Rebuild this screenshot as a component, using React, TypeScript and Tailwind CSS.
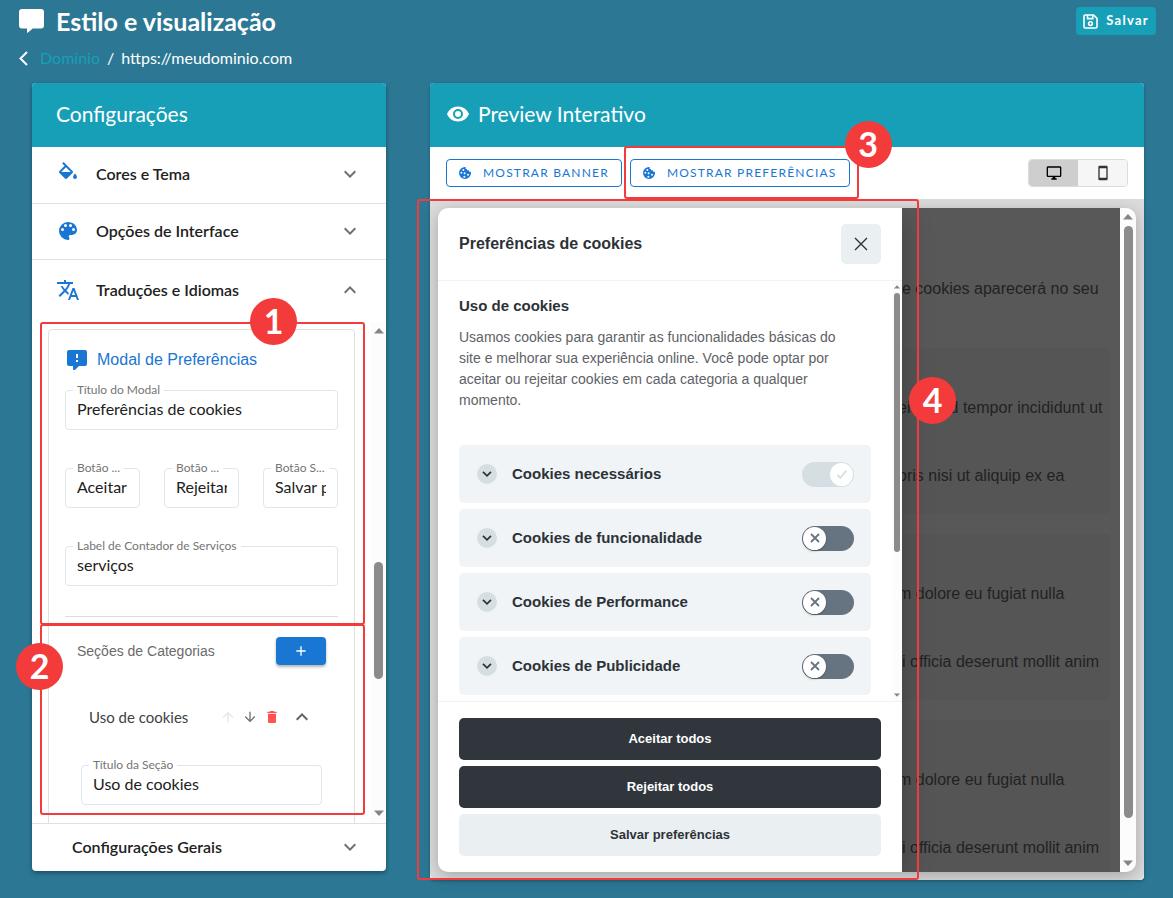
import React from "react";

const PATHS = {
  chevronDown: "M7.41,8.58L12,13.17L16.59,8.58L18,10L12,16L6,10L7.41,8.58Z",
  chevronUp: "M7.41,15.41L12,10.83L16.59,15.41L18,14L12,8L6,14L7.41,15.41Z",
  palette:
    "M17.5,12A1.5,1.5 0 0,1 16,10.5A1.5,1.5 0 0,1 17.5,9A1.5,1.5 0 0,1 19,10.5A1.5,1.5 0 0,1 17.5,12M14.5,8A1.5,1.5 0 0,1 13,6.5A1.5,1.5 0 0,1 14.5,5A1.5,1.5 0 0,1 16,6.5A1.5,1.5 0 0,1 14.5,8M9.5,8A1.5,1.5 0 0,1 8,6.5A1.5,1.5 0 0,1 9.5,5A1.5,1.5 0 0,1 11,6.5A1.5,1.5 0 0,1 9.5,8M6.5,12A1.5,1.5 0 0,1 5,10.5A1.5,1.5 0 0,1 6.5,9A1.5,1.5 0 0,1 8,10.5A1.5,1.5 0 0,1 6.5,12M12,3A9,9 0 0,0 3,12A9,9 0 0,0 12,21A1.5,1.5 0 0,0 13.5,19.5C13.5,19.11 13.35,18.76 13.11,18.5C12.88,18.23 12.73,17.88 12.73,17.5A1.5,1.5 0 0,1 14.23,16H16A5,5 0 0,0 21,11C21,6.58 16.97,3 12,3Z",
  fill: "M19,11.5C19,11.5 17,13.67 17,15A2,2 0 0,0 19,17A2,2 0 0,0 21,15C21,13.67 19,11.5 19,11.5M5.21,10L10,5.21L14.79,10M16.56,8.94L7.62,0L6.21,1.41L8.59,3.79L3.44,8.94C2.85,9.5 2.85,10.47 3.44,11.06L8.94,16.56C9.23,16.85 9.62,17 10,17C10.38,17 10.77,16.85 11.06,16.56L16.56,11.06C17.15,10.47 17.15,9.5 16.56,8.94Z",
  translate:
    "M12.87,15.07L10.33,12.56L10.36,12.53C12.1,10.59 13.34,8.36 14.07,6H17V4H10V2H8V4H1V6H12.17C11.5,7.92 10.44,9.75 9,11.35C8.07,10.32 7.3,9.19 6.69,8H4.69C5.42,9.63 6.42,11.17 7.67,12.56L2.58,17.58L4,19L9,14L12.11,17.11L12.87,15.07M18.5,10H16.5L12,22H14L15.12,19H19.87L21,22H23L18.5,10M15.88,17L17.5,12.67L19.12,17H15.88Z",
  eye: "M12,9A3,3 0 0,0 9,12A3,3 0 0,0 12,15A3,3 0 0,0 15,12A3,3 0 0,0 12,9M12,17A5,5 0 0,1 7,12A5,5 0 0,1 12,7A5,5 0 0,1 17,12A5,5 0 0,1 12,17M12,4.5C7,4.5 2.73,7.61 1,12C2.73,16.39 7,19.5 12,19.5C17,19.5 21.27,16.39 23,12C21.27,7.61 17,4.5 12,4.5Z",
  cookie:
    "M12,3A9,9 0 0,0 3,12A9,9 0 0,0 12,21A9,9 0 0,0 21,12C21,11.5 20.96,11 20.87,10.5C20.6,10 20,10 20,10H18V9C18,8 17,8 17,8H15V7C15,6 14,6 14,6H13V4C13,3 12,3 12,3M9.5,6A1.5,1.5 0 0,1 11,7.5A1.5,1.5 0 0,1 9.5,9A1.5,1.5 0 0,1 8,7.5A1.5,1.5 0 0,1 9.5,6M6.5,10A1.5,1.5 0 0,1 8,11.5A1.5,1.5 0 0,1 6.5,13A1.5,1.5 0 0,1 5,11.5A1.5,1.5 0 0,1 6.5,10M11.5,11A1.5,1.5 0 0,1 13,12.5A1.5,1.5 0 0,1 11.5,14A1.5,1.5 0 0,1 10,12.5A1.5,1.5 0 0,1 11.5,11M16.5,13A1.5,1.5 0 0,1 18,14.5A1.5,1.5 0 0,1 16.5,16H16.5A1.5,1.5 0 0,1 15,14.5H15A1.5,1.5 0 0,1 16.5,13M11,16A1.5,1.5 0 0,1 12.5,17.5A1.5,1.5 0 0,1 11,19A1.5,1.5 0 0,1 9.5,17.5A1.5,1.5 0 0,1 11,16Z",
  monitor:
    "M21,16H3V4H21M21,2H3C1.89,2 1,2.89 1,4V16A2,2 0 0,0 3,18H10V20H8V22H16V20H14V18H21A2,2 0 0,0 23,16V4C23,2.89 22.1,2 21,2Z",
  phone:
    "M17,19H7V5H17M17,1H7C5.89,1 5,1.89 5,3V21A2,2 0 0,0 7,23H17A2,2 0 0,0 19,21V3C19,1.89 18.1,1 17,1Z",
  commentAlert:
    "M9,22A1,1 0 0,1 8,21V18H4A2,2 0 0,1 2,16V4C2,2.89 2.9,2 4,2H20A2,2 0 0,1 22,4V16A2,2 0 0,1 20,18H13.9L10.2,21.71C10,21.9 9.75,22 9.5,22V22H9M13,10V6H11V10H13M13,14V12H11V14H13Z",
  arrowUp:
    "M13,20H11V8L5.5,13.5L4.08,12.08L12,4.16L19.92,12.08L18.5,13.5L13,8V20Z",
  arrowDown:
    "M11,4H13V16L18.5,10.5L19.92,11.92L12,19.84L4.08,11.92L5.5,10.5L11,16V4Z",
  trash:
    "M19,4H15.5L14.5,3H9.5L8.5,4H5V6H19M6,19A2,2 0 0,0 8,21H16A2,2 0 0,0 18,19V7H6V19Z",
  plus: "M19,13H13V19H11V13H5V11H11V5H13V11H19V13Z",
};

function Icon({ name, className = "size-6" }: { name: keyof typeof PATHS; className?: string }) {
  return (
    <svg viewBox="0 0 24 24" fill="currentColor" aria-hidden="true" className={`shrink-0 ${className}`}>
      <path d={PATHS[name]} />
    </svg>
  );
}

function Marker({ n, className }: { n: number; className: string }) {
  return (
    <span
      className={`absolute z-30 flex size-[47px] items-center justify-center rounded-full bg-[#f33b3b] pb-0.5 text-[34px] leading-none font-bold text-white ${className}`}
    >
      {n}
    </span>
  );
}

function Frame({ className }: { className: string }) {
  return <span className={`pointer-events-none absolute z-20 rounded-[3px] border-2 border-[#f33b3b] ${className}`} />;
}

function Triangle({ up = false, className }: { up?: boolean; className: string }) {
  return (
    <svg viewBox="0 0 10 6" fill="#858585" aria-hidden="true" className={className}>
      <path d={up ? "M5 0L10 5.5H0Z" : "M5 6L10 .5H0Z"} />
    </svg>
  );
}

function AccordionRow({
  icon,
  label,
  open = false,
  className,
}: {
  icon?: keyof typeof PATHS;
  label: string;
  open?: boolean;
  className: string;
}) {
  return (
    <button
      type="button"
      aria-expanded={open}
      className={`flex w-full items-center gap-4 px-6 pb-0.5 text-left text-base leading-6 font-semibold text-[#212121] ${className}`}
    >
      {icon ? <Icon name={icon} className="size-6 text-[#1976d2]" /> : <span />}
      <span className="flex-1">{label}</span>
      <Icon name={open ? "chevronUp" : "chevronDown"} className="size-6 text-[#707070]" />
    </button>
  );
}

function Field({ id, label, value }: { id: string; label: string; value: string }) {
  return (
    <div className="relative min-w-0 flex-1">
      <label
        htmlFor={id}
        className="absolute -top-2 left-2 bg-white px-1 text-xs leading-4 whitespace-nowrap text-[#757575]"
      >
        {label}
      </label>
      <input
        id={id}
        defaultValue={value}
        className="block h-10 w-full rounded-[4px] border border-[#e0e5e9] bg-transparent px-[11px] pb-[3px] text-base text-[#212121] outline-none"
      />
    </div>
  );
}

function Toggle({ label, locked = false }: { label: string; locked?: boolean }) {
  return (
    <label className="flex cursor-pointer">
      <input type="checkbox" className="peer sr-only" defaultChecked={locked} disabled={locked} aria-label={label} />
      <span
        className={`flex h-[25px] w-[52px] items-center rounded-full p-px ${
          locked ? "justify-end bg-[#d5dee2]" : "justify-start bg-[#667481]"
        }`}
      >
        <span
          className={`flex size-[23px] items-center justify-center rounded-full bg-white ${
            locked ? "" : "shadow-[0_1px_2px_rgba(24,32,3,0.36)]"
          }`}
        >
          <svg
            viewBox="0 0 12 12"
            fill="none"
            strokeWidth="1.8"
            className={`size-3 ${locked ? "stroke-[#d5dee2]" : "stroke-[#667481]"}`}
            aria-hidden="true"
          >
            <path d={locked ? "M1.5 7L4.3 9.8L10.5 2.5" : "M2 2L10 10M10 2L2 10"} />
          </svg>
        </span>
      </span>
    </label>
  );
}

function Category({ label, locked }: { label: string; locked?: boolean }) {
  return (
    <div className="flex h-[58px] items-center rounded-[5px] bg-[#f0f4f7] pr-[17px] pl-[18px]">
      <button type="button" className="flex flex-1 items-center gap-[15px] text-left text-[15px] font-bold text-[#2d3237]">
        <span className="flex size-5 items-center justify-center rounded-full bg-[#d5dee2]">
          <svg viewBox="0 0 10 6" fill="none" stroke="#2d3237" strokeWidth="1.7" className="h-[6px] w-[10px]" aria-hidden="true">
            <path d="M1 .8L5 4.8L9 .8" />
          </svg>
        </span>
        {label}
      </button>
      <Toggle label={label} locked={locked} />
    </div>
  );
}

function SettingsPanel() {
  return (
    <section className="rounded-[4px] bg-white shadow-[0_2px_4px_rgba(0,0,0,0.35)]">
      <h2 className="flex h-16 items-center rounded-t-[4px] bg-[#189fb8] px-6 pb-[3px] text-[21px] text-white">
        Configurações
      </h2>
      <AccordionRow icon="fill" label="Cores e Tema" className="h-[57px] border-b border-[#e0e0e0]" />
      <AccordionRow icon="palette" label="Opções de Interface" className="h-14 border-b border-[#e0e0e0]" />
      <AccordionRow icon="translate" label="Traduções e Idiomas" open className="h-[62px]" />

      <div className="relative">
        <div className="flex h-[501px] overflow-hidden">
          <div className="min-w-0 flex-1 px-4 pt-[7px]">
            <div className="flex h-[560px] flex-col rounded-[4px] border border-[#e0e0e0] px-4 pt-[18px]">
              <h3 className="flex items-center gap-2 font-['Liberation_Sans',sans-serif] text-base leading-6 text-[#1976d2]">
                <Icon name="commentAlert" />
                Modal de Preferências
              </h3>
              <div className="mt-[18px] flex">
                <Field id="titulo-modal" label="Título do Modal" value="Preferências de cookies" />
              </div>
              <div className="mt-[38px] flex gap-6">
                <Field id="botao-aceitar" label="Botão ..." value="Aceitar" />
                <Field id="botao-rejeitar" label="Botão ..." value="Rejeitar" />
                <Field id="botao-salvar" label="Botão S..." value="Salvar preferências" />
              </div>
              <div className="mt-[38px] flex">
                <Field id="contador" label="Label de Contador de Serviços" value="serviços" />
              </div>
              <hr className="mt-[30px] border-[#dcdcdc]" />
              <div className="mt-5 flex items-center justify-between px-3">
                <h4 className="font-['Liberation_Sans',sans-serif] text-sm text-[#6b6b6b]">Seções de Categorias</h4>
                <button
                  type="button"
                  aria-label="Adicionar seção"
                  className="flex h-7 w-[50px] items-center justify-center rounded-[4px] bg-[#1976d2] text-white shadow-[0_2px_3px_rgba(0,0,0,0.3)]"
                >
                  <Icon name="plus" className="size-4" />
                </button>
              </div>
              <div className="mt-10 flex h-6 items-center pr-6 pl-6 text-[15px] text-[#424242]">
                <span className="flex-1">Uso de cookies</span>
                <div className="flex items-center gap-[6px]">
                  <button type="button" aria-label="Mover para cima" disabled className="text-[#e6e6e6]">
                    <Icon name="arrowUp" className="size-4" />
                  </button>
                  <button type="button" aria-label="Mover para baixo" className="text-[#707070]">
                    <Icon name="arrowDown" className="size-4" />
                  </button>
                  <button type="button" aria-label="Excluir" className="text-[#ff5252]">
                    <Icon name="trash" className="size-4" />
                  </button>
                </div>
                <button type="button" aria-label="Recolher" className="ml-[10px] text-[#616161]">
                  <Icon name="chevronUp" />
                </button>
              </div>
              <div className="mt-9 flex px-4">
                <Field id="titulo-secao" label="Título da Seção" value="Uso de cookies" />
              </div>
            </div>
          </div>
          <div className="flex w-[15px] shrink-0 flex-col items-center bg-[#fcfcfc] pt-[6px] pb-[7px]">
            <Triangle up className="h-[6px] w-[10px]" />
            <div className="mt-[228px] h-[117px] w-[9px] rounded-full bg-[#8b8b8b]" />
            <Triangle className="mt-auto h-[6px] w-[10px]" />
          </div>
        </div>
        <Frame className="top-0 right-[21px] left-2 h-[303px]" />
        <Frame className="top-[302px] right-[21px] left-2 h-[191px]" />
        <Marker n={1} className="-top-6 left-[218px]" />
        <Marker n={2} className="top-[321px] -left-4" />
      </div>

      <AccordionRow label="Configurações Gerais" className="h-12 border-t border-[#e0e0e0]" />
    </section>
  );
}

const SAMPLE_CARDS = [
  ["eiusmod tempor incididunt ut", "oris nisi ut aliquip ex ea"],
  ["m dolore eu fugiat nulla", "i officia deserunt mollit anim"],
  ["m dolore eu fugiat nulla", "i officia deserunt mollit anim"],
];

function SamplePage() {
  return (
    <div className="flex min-w-0 flex-1 flex-col overflow-hidden bg-[#585858] pr-[10px] text-base leading-6 whitespace-nowrap text-[#222]">
      <p className="pt-[69px]">e cookies aparecerá no seu</p>
      <div className="mt-[47px] flex flex-1 flex-col gap-5">
        {SAMPLE_CARDS.map(([first, second], i) => (
          <div key={i} className="flex h-[166px] flex-col gap-11 rounded-r-[5px] bg-[#555] pt-12 last:h-auto last:flex-1 last:rounded-br-none">
            <p className="-ml-1">{first}</p>
            <p className={i === 0 ? "-ml-1" : ""}>{second}</p>
          </div>
        ))}
      </div>
    </div>
  );
}

function PreferencesModal() {
  return (
    <div
      role="dialog"
      aria-label="Preferências de cookies"
      className="z-10 flex w-[464px] shrink-0 flex-col bg-white text-[#2d3237] shadow-[0_10px_28px_rgba(2,2,3,0.28)]"
    >
      <div className="flex h-[73px] items-center justify-between border-b border-[#f0f2f4] px-[21px]">
        <h3 className="text-base font-bold">Preferências de cookies</h3>
        <button
          type="button"
          aria-label="Fechar"
          className="flex size-10 items-center justify-center rounded-[5px] bg-[#eaeff2]"
        >
          <svg viewBox="0 0 14 14" fill="none" stroke="#2d3237" strokeWidth="1.4" className="size-[14px]" aria-hidden="true">
            <path d="M1 1L13 13M13 1L1 13" />
          </svg>
        </button>
      </div>

      <div className="flex">
        <div className="min-w-0 flex-1 pt-4 pr-[21px] pb-[6px] pl-[21px]">
          <h4 className="text-[15px] leading-[18px] font-bold">Uso de cookies</h4>
          <p className="mt-3 pr-5 text-sm leading-[21px] text-[#5e6266]">
            Usamos cookies para garantir as funcionalidades básicas do site e melhorar sua experiência online. Você pode
            optar por aceitar ou rejeitar cookies em cada categoria a qualquer momento.
          </p>
          <div className="mt-[34px] grid gap-[6px]">
            <Category label="Cookies necessários" locked />
            <Category label="Cookies de funcionalidade" />
            <Category label="Cookies de Performance" />
            <Category label="Cookies de Publicidade" />
          </div>
        </div>
        <div className="flex w-[10px] shrink-0 flex-col items-center bg-[#fcfcfc] pt-1 pb-1">
          <Triangle up className="h-1 w-[6px]" />
          <div className="mt-1 h-[259px] w-[6px] rounded-full bg-[#8b8b8b]" />
          <Triangle className="mt-auto h-1 w-[6px]" />
        </div>
      </div>

      <div className="grid gap-[6px] border-t border-[#f0f2f4] px-[21px] py-4 text-[13px] font-bold">
        <button type="button" className="h-[42px] rounded-[5px] bg-[#30363c] text-white">
          Aceitar todos
        </button>
        <button type="button" className="h-[42px] rounded-[5px] bg-[#30363c] text-white">
          Rejeitar todos
        </button>
        <button type="button" className="h-[42px] rounded-[5px] bg-[#eaeff2]">
          Salvar preferências
        </button>
      </div>
    </div>
  );
}

function PreviewPanel() {
  const outlined =
    "flex h-7 items-center gap-[10px] rounded-[4px] border border-[#1976d2] pr-3 pl-[10px] text-xs tracking-widest text-[#1976d2]";
  return (
    <section className="relative rounded-[4px] bg-white shadow-[0_1px_3px_rgba(0,0,0,0.25)]">
      <h2 className="flex h-16 items-center gap-2 rounded-t-[4px] bg-[#189fb8] px-4 pb-0.5 text-[21px] text-white">
        <Icon name="eye" />
        Preview Interativo
      </h2>
      <div className="flex items-center justify-between border-b border-[#dcdcdc] px-4 py-3">
        <div className="flex gap-2">
          <button type="button" className={outlined}>
            <Icon name="cookie" className="size-4" />
            MOSTRAR BANNER
          </button>
          <div className="relative">
            <button type="button" className={outlined}>
              <Icon name="cookie" className="size-4" />
              MOSTRAR PREFERÊNCIAS
            </button>
            <Frame className="-top-[13px] -right-[9px] -bottom-3 -left-[6px]" />
            <Marker n={3} className="-top-[38px] -right-[42px]" />
          </div>
        </div>
        <div className="flex h-7 w-[100px] overflow-hidden rounded-[4px] border border-[#dcdcdc]">
          <button type="button" aria-label="Desktop" aria-pressed="true" className="flex flex-1 items-center justify-center bg-[#cecece] text-black">
            <Icon name="monitor" className="size-4" />
          </button>
          <button type="button" aria-label="Celular" aria-pressed="false" className="flex flex-1 items-center justify-center bg-[#f6f6f6] text-[#333]">
            <Icon name="phone" className="size-4" />
          </button>
        </div>
      </div>

      <div className="relative">
        <div className="rounded-b-[6px] bg-[#dcdcdc] p-2 font-['Liberation_Sans',sans-serif]">
          <div className="flex overflow-hidden rounded-[10px] shadow-[0_4px_16px_rgba(0,0,0,0.25)]">
            <PreferencesModal />
            <SamplePage />
            <div className="z-10 flex w-4 shrink-0 flex-col items-center bg-[#fcfcfc] pt-[6px] pb-[6px]">
              <Triangle up className="h-[6px] w-[10px]" />
              <div className="mt-[6px] h-[592px] w-[9px] rounded-full bg-[#8b8b8b]" />
              <Triangle className="mt-auto h-[6px] w-[10px]" />
            </div>
          </div>
        </div>
        <Frame className="-top-px bottom-0 -left-[13px] w-[502px]" />
        <Marker n={4} className="top-[177px] left-[479px]" />
      </div>
    </section>
  );
}

export default function App() {
  return (
    <div className="min-h-screen bg-[#2b7794] pb-[18px] font-['Lato','Open_Sans',sans-serif]">
      <header className="pt-[7px] pr-[17px] pl-[19px] text-white">
        <div className="flex h-7 items-center gap-3">
          <svg viewBox="0 0 25 24" fill="currentColor" className="h-6 w-[25px] shrink-0" aria-hidden="true">
            <path d="M3 0H22Q25 0 25 3V16.5Q25 19.5 22 19.5H13.8L9 23.6Q8 24.3 8 23V19.5H3Q0 19.5 0 16.5V3Q0 0 3 0Z" />
          </svg>
          <h1 className="flex-1 text-[25px] leading-7 font-bold">Estilo e visualização</h1>
          <button
            type="button"
            className="flex h-7 items-center gap-2 rounded-[4px] bg-[#189fb8] px-[7px] text-[13px] font-bold tracking-widest"
          >
            <svg viewBox="0 0 15 15" fill="none" stroke="currentColor" strokeWidth="1.6" className="size-[15px]" aria-hidden="true">
              <path d="M2.3 1H10.6L14 4.4V12.7Q14 14 12.7 14H2.3Q1 14 1 12.7V2.3Q1 1 2.3 1Z" />
              <path d="M4.5 1V4.6H9.8V1" />
              <circle cx="7.5" cy="9.6" r="1.9" />
            </svg>
            Salvar
          </button>
        </div>
        <nav aria-label="Navegação" className="mt-3 flex h-6 items-center pb-0.5 text-base">
          <svg viewBox="0 0 9 15" fill="none" stroke="currentColor" strokeWidth="2" className="mr-3 h-[15px] w-[9px]" aria-hidden="true">
            <path d="M8 1L1.5 7.5L8 14" />
          </svg>
          <a href="#dominio" className="text-[#189fb8]">
            Domínio
          </a>
          <span className="px-[7px]">/</span>
          <span>https://meudominio.com</span>
        </nav>
      </header>

      <main className="mt-3 grid grid-cols-[354fr_714fr] items-start gap-11 pr-[29px] pl-8">
        <SettingsPanel />
        <PreviewPanel />
      </main>
    </div>
  );
}
